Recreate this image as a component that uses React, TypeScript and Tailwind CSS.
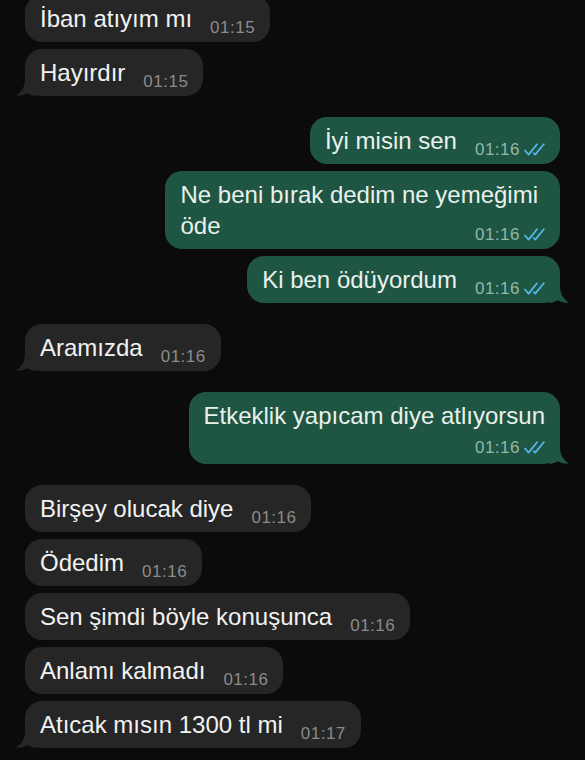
type Msg = {
  lines: string[];
  time: string;
  out?: boolean;
  tail?: boolean;
  below?: boolean;
  newGroup?: boolean;
  wide?: boolean;
};

const messages: Msg[] = [
  { lines: ["İban atıyım mı"], time: "01:15" },
  { lines: ["Hayırdır"], time: "01:15", tail: true },
  { lines: ["İyi misin sen"], time: "01:16", out: true, newGroup: true },
  { lines: ["Ne beni bırak dedim ne yemeğimi", "öde"], time: "01:16", out: true, wide: true },
  { lines: ["Ki ben ödüyordum"], time: "01:16", out: true, tail: true },
  { lines: ["Aramızda"], time: "01:16", tail: true, newGroup: true },
  { lines: ["Etkeklik yapıcam diye atlıyorsun"], time: "01:16", out: true, tail: true, below: true, newGroup: true },
  { lines: ["Birşey olucak diye"], time: "01:16", newGroup: true },
  { lines: ["Ödedim"], time: "01:16" },
  { lines: ["Sen şimdi böyle konuşunca"], time: "01:16" },
  { lines: ["Anlamı kalmadı"], time: "01:16" },
  { lines: ["Atıcak mısın 1300 tl mi"], time: "01:17", tail: true },
];

function Ticks() {
  return (
    <svg width="21" height="13" viewBox="0 0 21 13" fill="none" className="ml-[4px] mb-[1px]">
      <path d="M1 7.5 L4.6 11.6 L13 1.2" stroke="#52b7ea" strokeWidth="1.8" strokeLinecap="round" strokeLinejoin="round" />
      <path d="M9.8 10.2 L11.2 11.6 L19.8 1.2" stroke="#52b7ea" strokeWidth="1.8" strokeLinecap="round" strokeLinejoin="round" />
    </svg>
  );
}

function Tail({ out }: { out?: boolean }) {
  return (
    <svg
      width="20"
      height="18"
      viewBox="0 0 20 18"
      className={`absolute bottom-0 ${out ? "right-[-9px] -scale-x-100" : "left-[-9px]"}`}
    >
      <path
        d="M9 0 C9 8 6.5 13.5 0 17.6 C4 18 8 17.2 11.5 15.2 C14 16.8 16.5 17.6 20 18 L20 0 Z"
        fill={out ? "#1f5543" : "#262626"}
      />
    </svg>
  );
}

function Stamp({ m }: { m: Msg }) {
  return (
    <span className="flex items-end shrink-0">
      <span
        className={`text-[17px] leading-[14px] tracking-[0.5px] ${m.out ? "text-[#93b8a8]" : "text-[#8b8b8b]"}`}
      >
        {m.time}
      </span>
      {m.out && <Ticks />}
    </span>
  );
}

function Bubble({ m, first }: { m: Msg; first: boolean }) {
  const last = m.lines.length - 1;
  return (
    <div
      className={`flex ${m.out ? "justify-end" : "justify-start"} ${
        first ? "-mt-[5px]" : m.newGroup ? "mt-[21px]" : "mt-[7px]"
      }`}
    >
      <div
        className={`relative rounded-[17px] pl-[15px] pr-[15px] pt-[8px] pb-[8px] ${
          m.out ? "bg-[#1f5543] text-[#e9f1ec]" : "bg-[#262626] text-[#f2f2f2]"
        }`}
      >
        {m.tail && <Tail out={m.out} />}
        <div className="relative text-[24px] leading-[31px]">
          {m.below ? (
            <>
              <div>{m.lines[0]}</div>
              <div className="flex justify-end mt-[10px] mb-[1px]">
                <Stamp m={m} />
              </div>
            </>
          ) : (
            m.lines.map((line, i) =>
              i === last ? (
                <div key={i} className="flex items-end justify-between">
                  <span>{line}</span>
                  <span className="ml-[18px] translate-y-[1px]">
                    <Stamp m={m} />
                  </span>
                </div>
              ) : (
                <div key={i} className={m.wide ? "mr-[7px]" : ""}>
                  {line}
                </div>
              )
            )
          )}
        </div>
      </div>
    </div>
  );
}

export default function App() {
  return (
    <div
      className="h-[760px] overflow-hidden bg-[#0b0b0b] px-[25px] flex flex-col"
      style={{ fontFamily: '"Liberation Sans", Arial, sans-serif' }}
    >
      {messages.map((m, i) => (
        <Bubble key={i} m={m} first={i === 0} />
      ))}
    </div>
  );
}
